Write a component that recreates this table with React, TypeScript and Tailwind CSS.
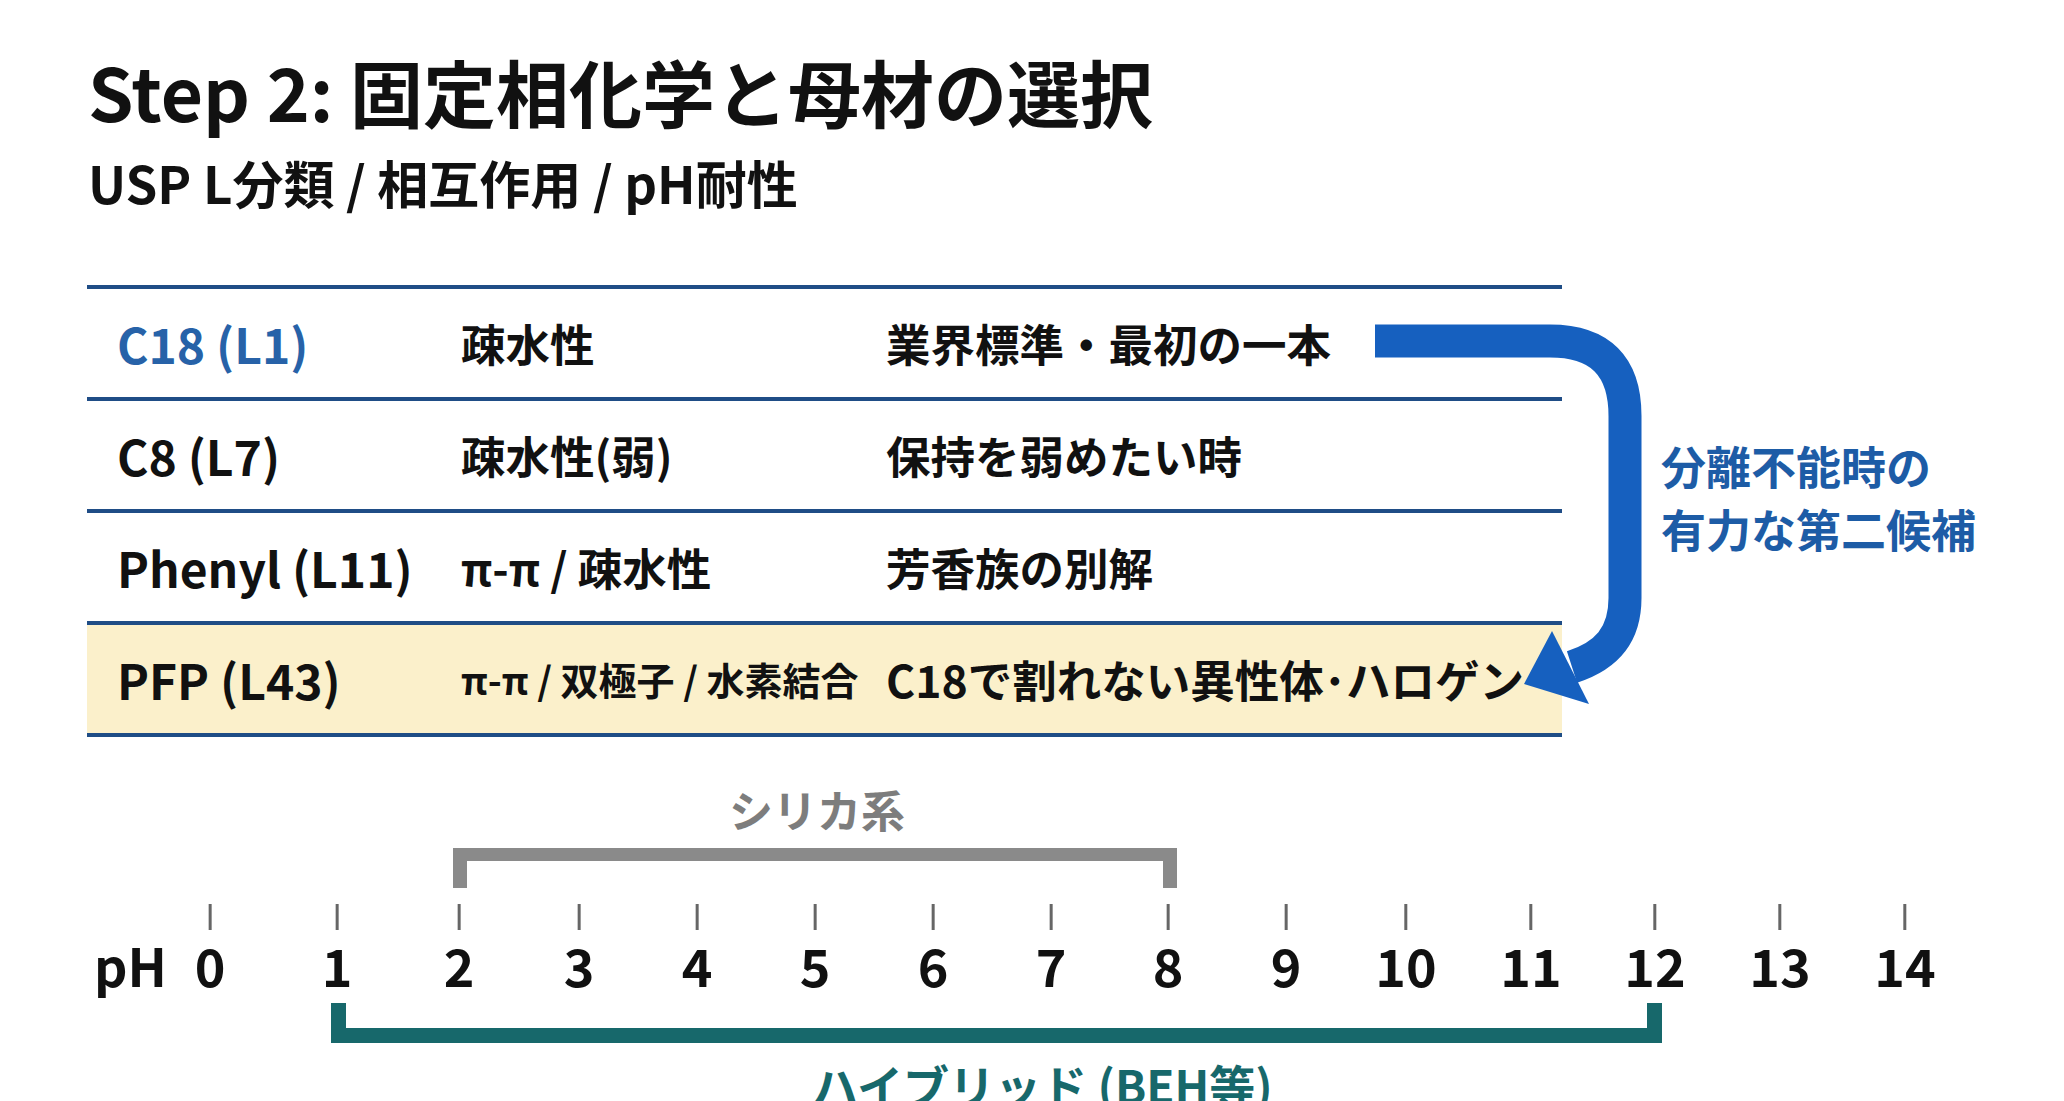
const rows = [
  { name: "C18 (L1)", mode: "疎水性", use: "業界標準・最初の一本", accent: true },
  { name: "C8 (L7)", mode: "疎水性(弱)", use: "保持を弱めたい時" },
  { name: "Phenyl (L11)", mode: "π-π / 疎水性", use: "芳香族の別解" },
  { name: "PFP (L43)", mode: "π-π / 双極子 / 水素結合", use: "C18で割れない異性体･ハロゲン", highlight: true },
];

const ticks = [210, 337, 459, 579, 697, 815, 933, 1051, 1168, 1286, 1406, 1531, 1655, 1780, 1905];

const App = () => {
  return (
    <div className="relative w-[2064px] h-[1101px] overflow-hidden bg-white text-[#111] font-['Noto_Sans_CJK_JP','Noto_Sans',sans-serif] font-bold">
      <div className="pl-[88px] pt-[54px]">
        <h1 className="text-[73px] leading-none">Step 2: 固定相化学と母材の選択</h1>
        <p className="mt-[30px] text-[51px] leading-none">USP L分類 / 相互作用 / pH耐性</p>
      </div>

      <div className="flex mt-[77px]">
        <div className="ml-[87px] w-[1475px]">
          <div className="h-[4px] bg-[#1f4d86]" />
          {rows.map((r) => (
            <div key={r.name}>
              <div
                className={`grid grid-cols-[344px_425px_1fr] items-center h-[108px] pl-[30px] text-[44.5px] leading-none ${
                  r.highlight ? "bg-[#fbf0cb]" : ""
                }`}
              >
                <span className={`text-[48px] ${r.accent ? "text-[#2762a8]" : ""}`}>{r.name}</span>
                <span className={r.highlight ? "text-[38px]" : ""}>{r.mode}</span>
                <span>{r.use}</span>
              </div>
              <div className="h-[4px] bg-[#1f4d86]" />
            </div>
          ))}
        </div>
        <div className="ml-[99px] mt-[149px] text-[45px] leading-[63px] text-[#1d5ca6]">
          <p>分離不能時の</p>
          <p>有力な第二候補</p>
        </div>
      </div>

      {/* pH scale */}
      <div className="relative h-[365px]">
        <span className="absolute left-[729px] top-[50px] text-[44px] leading-none text-[#7d7d7d]">シリカ系</span>
        <div className="absolute left-[453px] top-[111px] w-[724px] h-[40px] border-t-[13px] border-x-[14px] border-[#8a8a8a]" />

        <span className="absolute left-[94px] top-[202px] text-[52px] leading-none">pH</span>
        {ticks.map((x, i) => (
          <div key={i} className="absolute top-[167px] flex flex-col items-center -translate-x-1/2" style={{ left: x }}>
            <div className="w-[3px] h-[26px] bg-[#666]" />
            <span className="mt-[9px] text-[52px] leading-none">{i}</span>
          </div>
        ))}

        <div className="absolute left-[331px] top-[266px] w-[1331px] h-[40px] border-b-[15px] border-x-[15px] border-[#17686b]" />
        <span className="absolute left-[812px] top-[324px] text-[46px] leading-none text-[#17686b]">ハイブリッド (BEH等)</span>
      </div>

      {/* curved arrow from C18 to PFP */}
      <svg className="absolute inset-0 pointer-events-none" width="2064" height="1101" viewBox="0 0 2064 1101">
        <path
          d="M1375 341 H1550 Q1625 341 1625 416 V598 C1625 636 1606 656 1572 667"
          fill="none"
          stroke="#1660bf"
          strokeWidth="33"
        />
        <polygon points="1524,684 1552,631 1589,704" fill="#1660bf" />
      </svg>
    </div>
  );
};

export default App;
